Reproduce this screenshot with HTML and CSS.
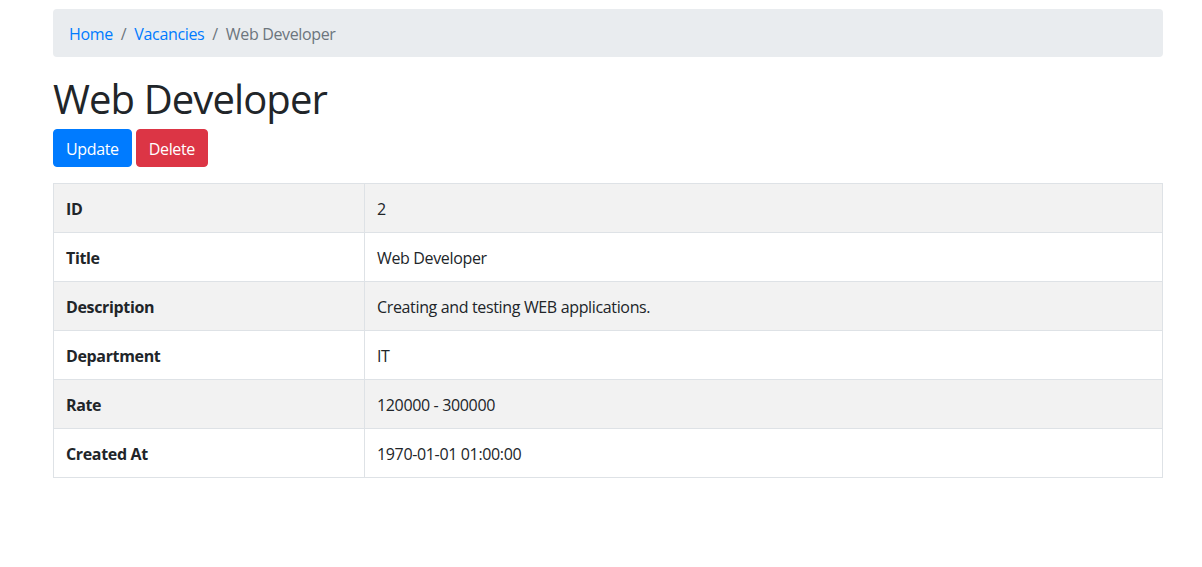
FILE: index.html
```html
<!DOCTYPE html>
<html lang="en">
<head>
<meta charset="utf-8">
<title>Web Developer</title>
<link rel="stylesheet" href="styles.css">
</head>
<body>
<div class="wrap">
  <div class="container">
    <ol class="breadcrumb">
      <li class="crumb"><a href="#">Home</a></li>
      <li class="crumb"><a href="#">Vacancies</a></li>
      <li class="crumb active">Web Developer</li>
    </ol>
    <h1 class="title">Web Developer</h1>
    <p class="actions">
      <a class="btn btn-primary" href="#">Update</a>
      <a class="btn btn-danger" href="#">Delete</a>
    </p>
    <table class="detail">
      <tbody>
        <tr><th>ID</th><td>2</td></tr>
        <tr><th>Title</th><td>Web Developer</td></tr>
        <tr><th>Description</th><td>Creating and testing WEB applications.</td></tr>
        <tr><th>Department</th><td>IT</td></tr>
        <tr><th>Rate</th><td>120000 - 300000</td></tr>
        <tr><th>Created At</th><td>1970-01-01 01:00:00</td></tr>
      </tbody>
    </table>
  </div>
</div>
</body>
</html>
```

FILE: styles.css
```css
* { box-sizing: border-box; }
html, body { margin: 0; padding: 0; background: #fff; }
body {
  font-family: "Open Sans", "Noto Sans", "Liberation Sans", sans-serif;
  font-size: 16px;
  line-height: 24px;
  letter-spacing: -0.35px;
  color: #212529;
}
.wrap { padding: 9px 0 0 53px; }
.container { width: 1110px; }
.breadcrumb {
  display: flex;
  list-style: none;
  margin: 0 0 16px;
  padding: 13px 16px 11px;
  background: #e9ecef;
  border-radius: 4px;
}
.crumb + .crumb::before {
  content: "/";
  color: #6c757d;
  padding: 0 8px;
}
.crumb a { color: #007bff; text-decoration: none; }
.crumb.active { color: #6c757d; }
.title {
  font-size: 40px;
  font-weight: 400;
  line-height: 48px;
  letter-spacing: -0.9px;
  margin: 0 0 8px;
  padding-top: 2px;
  height: 48px;
}
.actions { margin: 0 0 16px; display: flex; gap: 4px; }
.btn {
  display: inline-block;
  padding: 7px 12px 5px;
  border: 1px solid transparent;
  border-radius: 4px;
  color: #fff;
  text-decoration: none;
  line-height: 24px;
}
.btn-primary { background: #007bff; border-color: #007bff; }
.btn-danger { background: #dc3545; border-color: #dc3545; }
.detail {
  width: 100%;
  border-collapse: collapse;
  border: 1px solid #dee2e6;
}
.detail th, .detail td {
  border: 1px solid #dee2e6;
  padding: 13px 12px 11px;
  text-align: left;
  vertical-align: top;
}
.detail th { width: 311px; font-weight: 700; }
.detail tr:nth-child(odd) { background: #f2f2f2; }
```
